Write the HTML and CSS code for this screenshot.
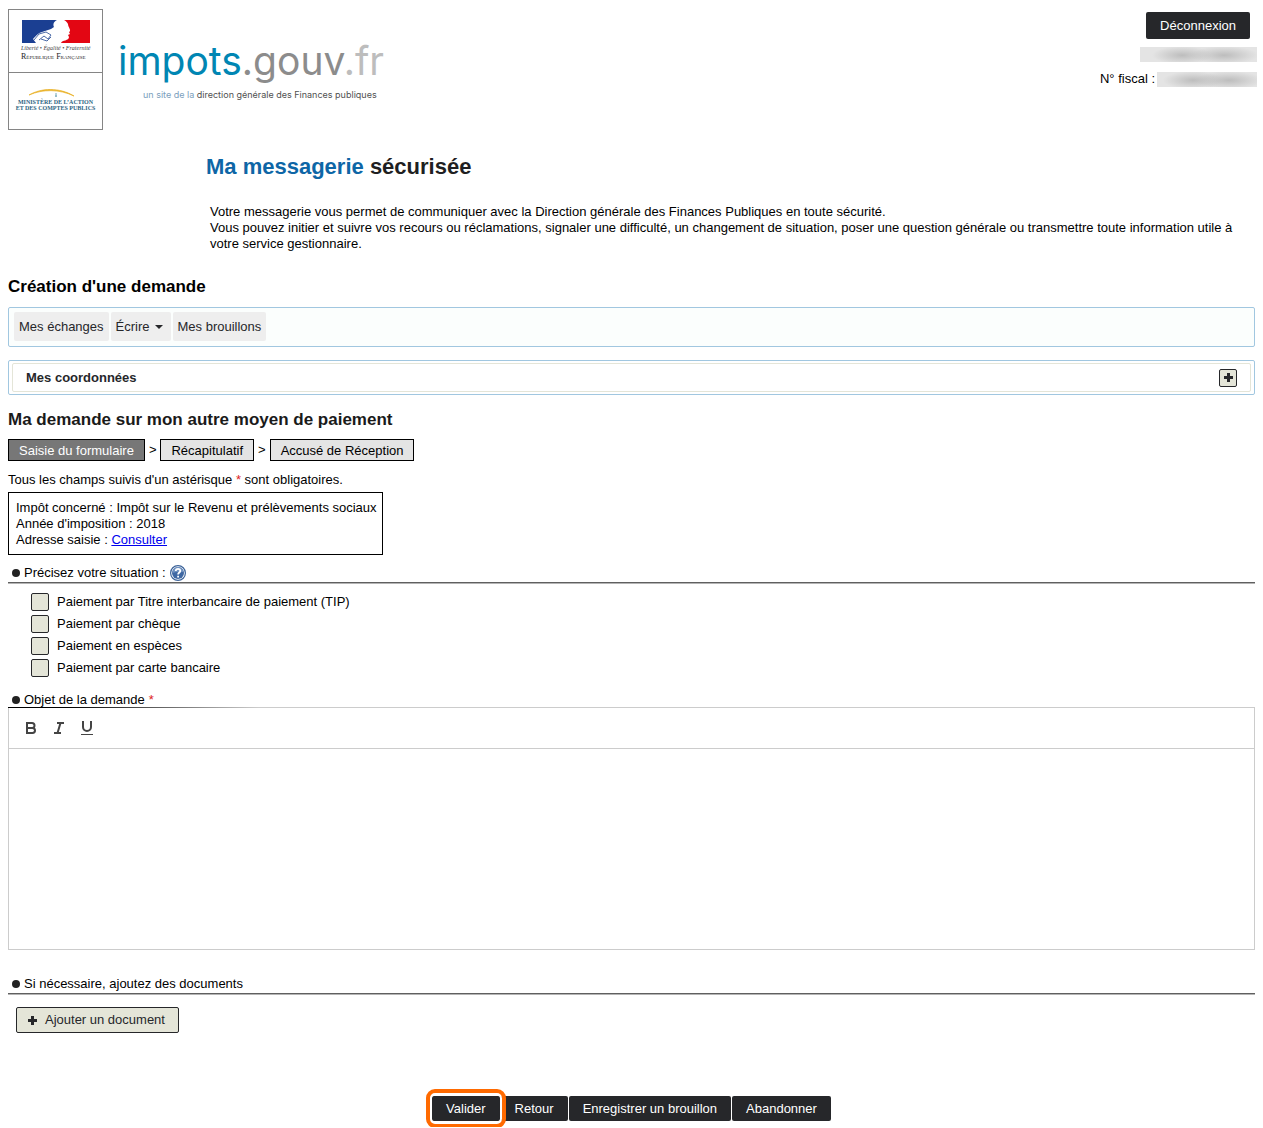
FILE: index.html
```html
<!DOCTYPE html>
<html lang="fr">
<head>
<meta charset="utf-8">
<title>Ma messagerie sécurisée</title>
<link rel="stylesheet" href="styles.css">
</head>
<body>
<header class="site-header">
  <svg class="crest" width="95" height="121" viewBox="0 0 95 121" role="img" aria-label="République Française">
    <rect x=".5" y=".5" width="94" height="120" fill="#fff" stroke="#858585"/>
    <path d="M0 63.500H95" stroke="#858585"/>
    <path d="M14 11H49C45 13 45 16 46 18L43 20C40 21 37 22 34 23C30 24 28 27 25 30L28 34H14Z" fill="#1b3f92"/>
    <path d="M56 11H82V34H53C54 31 61 32 61 28L60 26L62 25L61 23C64 22 60 18 60 15C59 13 58 12 56 11Z" fill="#e30613"/>
    <path d="M26 31L31 25L38 23L43 26L40 30L36 27L31 31M33 30L39 32L43 28" fill="none" stroke="#4c6ba8"/>
    <text x="13" y="41" class="crest-motto">Liberté • Égalité • Fraternité</text>
    <text x="13" y="50" class="crest-name">R<tspan class="small-cap">ÉPUBLIQUE</tspan> F<tspan class="small-cap">RANÇAISE</tspan></text>
    <path d="M21 86C33 79 51 78 66 87C51 80 35 80 21 86Z" fill="#e8ae1c" stroke="#e8ae1c" stroke-width=".7"/>
    <path d="M48 84V88M47 87H49" stroke="#76a8b8"/>
    <text x="47.500" y="95" class="crest-ministry">MINISTÈRE DE L’ACTION</text>
    <text x="47.500" y="101" class="crest-ministry">ET DES COMPTES PUBLICS</text>
  </svg>
  <div class="brand">
    <div class="brand-name">impots<span class="brand-gouv">.gouv</span><span class="brand-fr">.fr</span></div>
    <div class="brand-tag"><span>un site de la</span> direction générale des Finances publiques</div>
  </div>
  <div class="account">
    <button type="button" class="dark-button">Déconnexion</button>
    <div class="masked masked-name"></div>
    <div class="tax-id">N° fiscal : <span class="masked masked-id"></span></div>
  </div>
</header>

<main>
  <h1><span>Ma messagerie</span> sécurisée</h1>
  <p class="intro">Votre messagerie vous permet de communiquer avec la Direction générale des Finances Publiques en toute sécurité.<br>Vous pouvez initier et suivre vos recours ou réclamations, signaler une difficulté, un changement de situation, poser une question générale ou transmettre toute information utile à votre service gestionnaire.</p>

  <h2>Création d'une demande</h2>
  <nav class="menu">
    <a href="#">Mes échanges</a>
    <a href="#" class="has-menu">Écrire</a>
    <a href="#">Mes brouillons</a>
  </nav>
  <section class="details">
    <div class="details-bar">
      <h3>Mes coordonnées</h3>
      <button type="button" class="expand" aria-label="Afficher mes coordonnées"><svg width="9" height="9" viewBox="0 0 9 9"><path d="M3 0H6V3H9V6H6V9H3V6H0V3H3Z" fill="#26272a"/></svg></button>
    </div>
  </section>

  <h2 class="request-title">Ma demande sur mon autre moyen de paiement</h2>
  <div class="steps">
    <span class="step current">Saisie du formulaire</span><span>&gt;</span><span class="step">Récapitulatif</span><span>&gt;</span><span class="step">Accusé de Réception</span>
  </div>
  <p class="required-note">Tous les champs suivis d'un astérisque <span class="star">*</span> sont obligatoires.</p>
  <div class="summary">
    Impôt concerné : Impôt sur le Revenu et prélèvements sociaux<br>
    Année d'imposition : 2018<br>
    Adresse saisie : <a href="#">Consulter</a>
  </div>

  <form>
    <div class="section-title" id="situation">Précisez votre situation :
      <svg class="help" width="16" height="16" viewBox="0 0 16 16" role="img" aria-label="Aide">
        <circle cx="8" cy="8" r="7.400" fill="#fff" stroke="#3c6399" stroke-width="1.200"/>
        <circle cx="8" cy="8" r="6" fill="#3f68a3"/>
        <path d="M2.500 8A5.500 5.500 0 0 1 13.500 7Q8 6 2.500 8" fill="#6f91c0"/>
        <path d="M5.700 6C5.900 3.200 10.400 3.300 10.300 5.900C10.200 7.500 8.100 7.600 8.100 9.500M8.100 10.800V12.600" fill="none" stroke="#fff" stroke-width="1.800"/>
      </svg>
    </div>
    <div class="choices" role="group" aria-labelledby="situation">
      <label><input type="checkbox">Paiement par Titre interbancaire de paiement (TIP)</label>
      <label><input type="checkbox">Paiement par chèque</label>
      <label><input type="checkbox">Paiement en espèces</label>
      <label><input type="checkbox">Paiement par carte bancaire</label>
    </div>

    <label class="section-title fading" for="message">Objet de la demande <span class="star">*</span></label>
    <div class="editor">
      <div class="editor-tools">
        <button type="button" aria-label="Gras"><svg width="18" height="18" viewBox="0 0 18 18"><path d="M5 4H10A2.500 2.500 0 0 1 10 9H5ZM5 9H10.500A2.500 2.500 0 0 1 10.500 14H5Z"/></svg></button>
        <button type="button" aria-label="Italique"><svg width="18" height="18" viewBox="0 0 18 18"><path d="M7 4H14M4 14H11M10.500 4L7.500 14"/></svg></button>
        <button type="button" aria-label="Souligné"><svg width="18" height="18" viewBox="0 0 18 18"><path d="M5 2V8A4 4 0 0 0 13 8V2"/><path d="M3 15.500H15" class="thin"/></svg></button>
      </div>
      <textarea id="message"></textarea>
    </div>

    <div class="section-title">Si nécessaire, ajoutez des documents</div>
    <button type="button" class="add-document"><svg width="9" height="9" viewBox="0 0 9 9"><path d="M3 0H6V3H9V6H6V9H3V6H0V3H3Z" fill="#26272a"/></svg>Ajouter un document</button>

    <div class="actions">
      <button type="submit" class="dark-button highlighted">Valider</button>
      <button type="button" class="dark-button">Retour</button>
      <button type="button" class="dark-button">Enregistrer un brouillon</button>
      <button type="button" class="dark-button">Abandonner</button>
    </div>
  </form>
</main>
</body>
</html>
```

FILE: styles.css
```css
* { box-sizing: border-box; }

body {
  margin: 0;
  padding: 0 8px;
  background: #fff;
  color: #000;
  font: 13px/16px "Liberation Sans", Arial, sans-serif;
}

button { font: inherit; cursor: pointer; }
h1, h2, h3, p { margin: 0; }

/* Header */
.site-header { display: flex; padding-top: 9px; }
.crest { flex: none; }
.crest-motto { font: italic 6px "Liberation Serif", serif; fill: #444; }
.crest-name { font: 8px "Liberation Serif", serif; fill: #222; }
.crest-name .small-cap { font-size: 5px; }
.crest-ministry { font: bold 6px "Liberation Serif", serif; fill: #2c6482; text-anchor: middle; }

.brand { padding: 28px 0 0 15px; white-space: nowrap; }
.brand-name { font: 400 39px/48px Inter, sans-serif; color: #0086b3; }
.brand-gouv { color: #8c8c8c; }
.brand-fr { color: #bdbdbd; }
.brand-tag { padding: 4px 0 0 25px; font: 9px/12px Inter, sans-serif; color: #505050; }
.brand-tag span { color: #7ba0bd; }

.account {
  display: flex;
  flex-direction: column;
  align-items: flex-end;
  margin-left: auto;
  padding-top: 3px;
}
.account .dark-button { height: 27px; margin-right: 5px; }
.masked {
  height: 15px;
  background:
    radial-gradient(ellipse 30px 9px at 36% 55%, #bdbdbd, transparent),
    radial-gradient(ellipse 34px 9px at 72% 55%, #bdbdbd, transparent),
    #e4e4e4;
}
.masked-name { width: 117px; margin: 8px -2px 9px 0; }
.tax-id { display: flex; align-items: center; gap: 2px; margin-right: -2px; }
.masked-id { width: 100px; }

.dark-button {
  padding: 0 14px;
  border: 0;
  border-radius: 2px;
  background: #26272a;
  color: #fff;
}

/* Introduction */
h1 { margin: 24px 0 0 198px; font-size: 22px; line-height: 26px; color: #1f1f22; }
h1 span { color: #0e66a6; }
.intro { margin: 24px 16px 25px 202px; }
h2 { font-size: 17px; line-height: 20px; }

/* Menu */
.menu {
  display: flex;
  gap: 2px;
  height: 40px;
  margin: 10px 0 13px;
  padding: 4px 5px;
  border: 1px solid #a1c7e0;
  border-radius: 2px;
  background: #fbfefd;
}
.menu a {
  display: flex;
  align-items: center;
  height: 29px;
  padding: 0 5px;
  border-radius: 2px;
  background: #eee;
  color: #26272a;
  text-decoration: none;
}
.has-menu::after {
  content: "";
  margin: 1px 3px 0 5px;
  border: 4px solid transparent;
  border-top-color: #26272a;
  border-bottom: 0;
}

.details { padding: 2px 3px; border: 1px solid #a1c7e0; border-radius: 2px; }
.details-bar {
  display: flex;
  align-items: center;
  justify-content: space-between;
  height: 29px;
  padding: 0 13px;
  border: 1px solid #e4e5d8;
  border-radius: 2px;
}
h3 { font-size: 13px; line-height: 16px; color: #26272a; }
.expand {
  display: grid;
  place-items: center;
  width: 18px;
  height: 18px;
  padding: 0;
  border: 1px solid #26272a;
  border-radius: 2px;
  background: #e4e5d8;
}

/* Request */
.request-title { margin: 15px 0 9px; color: #1a1a1a; }
.steps { display: flex; align-items: center; gap: 4px; }
.step { height: 22px; padding: 3px 10px 1px; border: 1px solid #000; background: #e4e4e4; }
.current { background: #777; color: #fff; }
.required-note { margin: 11px 0 4px; }
.star { color: #d22; }
.summary { width: fit-content; padding: 7px 5px 6px 7px; border: 1px solid #000; }
.summary a { color: #00e; }

.section-title {
  display: flex;
  align-items: center;
  gap: 4px;
  height: 20px;
  margin-top: 8px;
  padding-left: 4px;
  border-bottom: 1px solid #606060;
  box-shadow: 0 1px #b4b4b4;
}
.section-title::before {
  content: "";
  width: 8px;
  height: 8px;
  border-radius: 50%;
  background: #222;
}
.fading {
  height: 17px;
  margin: 14px 0 0;
  border: 0;
  box-shadow: none;
  background: linear-gradient(90deg, #000 60px, #ccc 250px) bottom / 100% 1px no-repeat;
}

.choices { display: grid; gap: 4px; padding: 10px 0 0 23px; }
.choices label { display: flex; align-items: center; gap: 8px; width: fit-content; }
.choices input {
  appearance: none;
  width: 18px;
  height: 18px;
  margin: 0;
  border: 1px solid #26272a;
  border-radius: 2px;
  background: #e4e5d8;
}

.editor { border: 1px solid #ccc; border-top: 0; }
.editor-tools {
  display: flex;
  height: 41px;
  padding: 8px;
  border-bottom: 1px solid #ccc;
}
.editor-tools button {
  display: grid;
  place-items: center;
  width: 28px;
  height: 24px;
  padding: 0;
  border: 0;
  background: none;
}
.editor-tools path { fill: none; stroke: #444; stroke-width: 2; }
.editor-tools .thin { stroke-width: 1; }
textarea { display: block; width: 100%; height: 200px; padding: 12px; border: 0; resize: none; font: inherit; }
.editor + .section-title { margin-top: 24px; }

.add-document {
  display: flex;
  align-items: center;
  gap: 8px;
  height: 26px;
  margin: 13px 0 0 8px;
  padding: 0 13px 0 11px;
  border: 1px solid #26272a;
  border-radius: 2px;
  background: #e4e5d8;
  color: #26272a;
}

.actions { display: flex; justify-content: center; gap: 1px; margin: 63px 0 6px; }
.actions .dark-button { height: 25px; }
.actions .highlighted { position: relative; }
.highlighted::after {
  content: "";
  position: absolute;
  inset: -7px -6px;
  border: 4px solid #ff6a00;
  border-radius: 9px;
  box-shadow: inset 0 0 0 2px #fff;
}
```
